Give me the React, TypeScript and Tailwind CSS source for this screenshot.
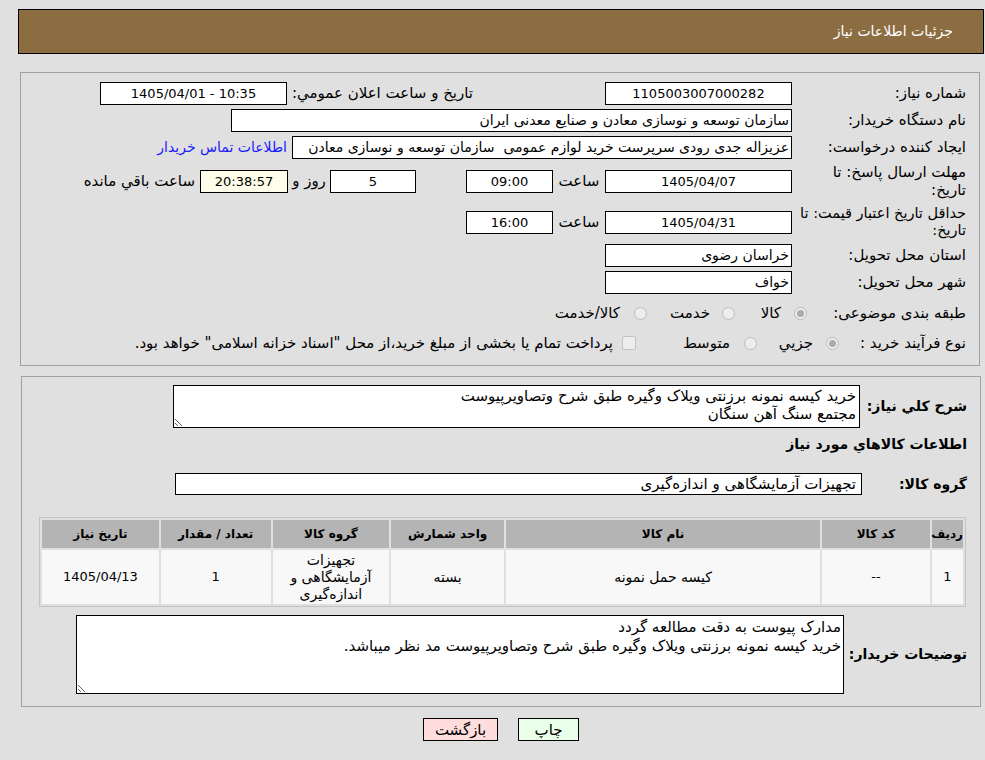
// Need details page - read-only view of a tender request
import React from "react";

type BoxProps = {
  className?: string;
  align?: "center" | "right";
  children?: React.ReactNode;
};

// Bordered read-only value box
function Box({ className = "", align = "center", children }: BoxProps) {
  return (
    <div
      className={`box-border h-[23px] shrink-0 overflow-hidden whitespace-nowrap border border-black px-[2px] leading-[21px] ${
        align === "center" ? "text-center text-[13px]" : "text-right text-[14px]"
      } ${className}`}
    >
      {children}
    </div>
  );
}

function Radio({ checked = false }: { checked?: boolean }) {
  return (
    <span className="flex h-[13px] w-[13px] shrink-0 items-center justify-center rounded-full border border-[#bcbcbc] bg-[#ededed]">
      {checked && <span className="h-[7px] w-[7px] rounded-full bg-[#ababab]" />}
    </span>
  );
}

function Label({ className = "", children }: { className?: string; children: React.ReactNode }) {
  return <div className={`shrink-0 whitespace-nowrap text-right ${className}`}>{children}</div>;
}

const items = [
  {
    row: "1",
    code: "--",
    name: "کیسه حمل نمونه",
    unit: "بسته",
    qty: "1",
    date: "1405/04/13",
  },
];

export default function App() {
  return (
    <div
      dir="rtl"
      className="min-h-[760px] w-[985px] bg-[#e0e0e0] pt-[9px] font-['Tahoma','DejaVu_Sans',sans-serif] text-[15px] text-black"
    >
      {/* page title bar */}
      <div className="mr-px box-border flex h-[45px] w-[966px] items-center border border-black bg-[#8c6d42] pr-[30px] text-[14px] text-white">
        جزئیات اطلاعات نیاز
      </div>

      {/* general info */}
      <section className="mr-[5px] mt-[18px] box-border w-[960px] border border-[#a0a0a0] pb-[11px] pr-[13px] pt-[9px]">
        <div className="flex h-[23px] items-center">
          <Label className="w-[174px]">شماره نیاز:</Label>
          <Box className="w-[187px] bg-white">1105003007000282</Box>
          <Label className="mr-[132px] w-[181px]">تاریخ و ساعت اعلان عمومي:</Label>
          <Box className="mr-[5px] w-[187px] bg-white">
            <span dir="ltr">1405/04/01 - 10:35</span>
          </Box>
        </div>

        <div className="mt-[4px] flex h-[23px] items-center">
          <Label className="w-[174px]">نام دستگاه خریدار:</Label>
          <Box align="right" className="w-[561px] bg-white">
            سازمان توسعه و نوسازی معادن و صنایع معدنی ایران
          </Box>
        </div>

        <div className="mt-[4px] flex h-[23px] items-center">
          <Label className="w-[174px]">ایجاد کننده درخواست:</Label>
          <Box align="right" className="w-[500px] bg-white">
            عزیزاله جدی رودی سرپرست خرید لوازم عمومی&nbsp; سازمان توسعه و نوسازی معادن
          </Box>
          <a className="mr-[5px] text-[14px] text-[#1a1aff]" href="#">
            اطلاعات تماس خریدار
          </a>
        </div>

        <div className="mt-[4px] flex h-[36px] items-center">
          <Label className="w-[174px] leading-[18px]">
            مهلت ارسال پاسخ: تا
            <br />
            تاریخ:
          </Label>
          <Box className="w-[187px] bg-white">1405/04/07</Box>
          <span className="w-[52px] text-center">ساعت</span>
          <Box className="w-[87px] bg-white">09:00</Box>
          <Box className="mr-[50px] w-[86px] bg-white">5</Box>
          <span className="w-[42px] text-center">روز و</span>
          <Box className="w-[88px] bg-[#fdfde9]">20:38:57</Box>
          <span className="mr-[5px]">ساعت باقي مانده</span>
        </div>

        <div className="mt-[5px] flex h-[36px] items-center">
          <Label className="w-[174px] text-[14.5px] leading-[17px]">
            حداقل تاریخ اعتبار قیمت: تا
            <br />
            تاریخ:
          </Label>
          <Box className="w-[187px] bg-white">1405/04/31</Box>
          <span className="w-[52px] text-center">ساعت</span>
          <Box className="w-[87px] bg-white">16:00</Box>
        </div>

        <div className="mt-[4px] flex h-[23px] items-center">
          <Label className="w-[174px]">استان محل تحویل:</Label>
          <Box align="right" className="w-[187px] bg-white">
            خراسان رضوی
          </Box>
        </div>

        <div className="mt-[4px] flex h-[23px] items-center">
          <Label className="w-[174px]">شهر محل تحویل:</Label>
          <Box align="right" className="w-[187px] bg-white">
            خواف
          </Box>
        </div>

        <div className="mt-[8px] flex h-[22px] items-center">
          <Label className="w-[159px]">طبقه بندی موضوعی:</Label>
          <div className="flex w-[72px] items-center gap-[13px]">
            <Radio checked />
            <span>کالا</span>
          </div>
          <div className="flex w-[88px] items-center gap-[12px]">
            <Radio />
            <span>خدمت</span>
          </div>
          <div className="flex items-center gap-[14px]">
            <Radio />
            <span>کالا/خدمت</span>
          </div>
        </div>

        <div className="mt-[8px] flex h-[22px] items-center">
          <Label className="w-[127px]">نوع فرآیند خرید :</Label>
          <div className="flex w-[82px] items-center gap-[13px]">
            <Radio checked />
            <span>جزيي</span>
          </div>
          <div className="flex w-[121px] items-center gap-[14px]">
            <Radio />
            <span>متوسط</span>
          </div>
          <div className="flex items-center gap-[9px]">
            <span className="h-[14px] w-[14px] shrink-0 rounded-[2px] border border-[#c2c2c2] bg-[#ededed]" />
            <span>پرداخت تمام یا بخشی از مبلغ خرید،از محل "اسناد خزانه اسلامی" خواهد بود.</span>
          </div>
        </div>
      </section>

      {/* description and goods */}
      <section className="mr-[4px] mt-[10px] box-border w-[960px] border border-[#a0a0a0] pb-[12px] pr-[13px] pt-[8px]">
        <div className="flex items-center">
          <Label className="w-[107px] text-[14px] font-bold">شرح كلي نياز:</Label>
          <textarea
            readOnly
            dir="rtl"
            className="box-border h-[43px] w-[687px] border border-black bg-white px-[3px] pt-[1px] text-[15px] leading-[18px] text-black outline-none"
            value={"خرید کیسه نمونه برزنتی ویلاک وگیره طبق شرح وتصاویرپیوست\nمجتمع سنگ آهن سنگان"}
          />
        </div>

        <div className="mt-[6px] flex h-[20px] items-center text-[14px] font-bold">
          اطلاعات كالاهاي مورد نياز
        </div>

        <div className="mt-[19px] flex h-[22px] items-center">
          <Label className="w-[105px] text-[14px] font-bold">گروه کالا:</Label>
          <div className="box-border h-[22px] w-[687px] border border-black bg-white pr-[5px] leading-[20px]">
            تجهیزات آزمایشگاهی و اندازه‌گیری
          </div>
        </div>

        <table className="mr-px mt-[22px] w-[927px] table-fixed border-separate border-spacing-[2px] border border-[#c4c4c4] text-[14px]">
          <colgroup>
            <col className="w-[31px]" />
            <col className="w-[107px]" />
            <col className="w-[312px]" />
            <col className="w-[112px]" />
            <col className="w-[116px]" />
            <col className="w-[109px]" />
            <col className="w-[116px]" />
          </colgroup>
          <thead>
            <tr className="h-[28px] bg-[#b4b4b4] text-[12px] font-bold">
              <th className="px-0 font-bold">ردیف</th>
              <th className="font-bold">کد کالا</th>
              <th className="font-bold">نام کالا</th>
              <th className="font-bold">واحد شمارش</th>
              <th className="font-bold">گروه کالا</th>
              <th className="font-bold">تعداد / مقدار</th>
              <th className="font-bold">تاریخ نیاز</th>
            </tr>
          </thead>
          <tbody>
            {items.map((it) => (
              <tr key={it.row} className="h-[54px] bg-[#f8f8f8] text-center">
                <td className="text-[13px]">{it.row}</td>
                <td className="text-[13px]">{it.code}</td>
                <td>{it.name}</td>
                <td>{it.unit}</td>
                <td className="leading-[17px]">
                  تجهیزات
                  <br />
                  آزمایشگاهی و
                  <br />
                  اندازه‌گیری
                </td>
                <td className="text-[13px]">{it.qty}</td>
                <td className="text-[13px]">{it.date}</td>
              </tr>
            ))}
          </tbody>
        </table>

        <div className="mt-[8px] flex items-center">
          <Label className="w-[123px] text-[14px] font-bold">توضیحات خریدار:</Label>
          <textarea
            readOnly
            dir="rtl"
            className="box-border h-[79px] w-[768px] border border-black bg-white px-[2px] pt-[2px] text-[15px] leading-[19px] text-black outline-none"
            value={"مدارک پیوست به دقت مطالعه گردد\nخرید کیسه نمونه برزنتی ویلاک وگیره طبق شرح وتصاویرپیوست مد نظر میباشد."}
          />
        </div>
      </section>

      {/* actions */}
      <div className="mr-[4px] mt-[11px] flex w-[960px] justify-center gap-[20px]">
        <button className="box-border h-[23px] w-[61px] border border-black bg-[#eaffea] text-[15px]">چاپ</button>
        <button className="box-border h-[23px] w-[75px] border border-black bg-[#ffdddd] text-[15px]">بازگشت</button>
      </div>
    </div>
  );
}
